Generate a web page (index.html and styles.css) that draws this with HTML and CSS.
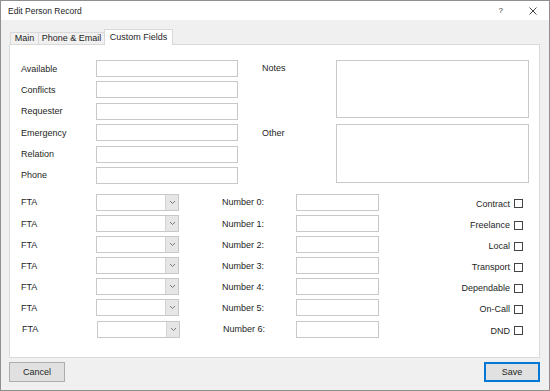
FILE: index.html
```html
<!DOCTYPE html>
<html lang="en">
<head>
    <meta charset="UTF-8">
    <title>Edit Person Record</title>
    <link rel="stylesheet" href="styles.css">
</head>
<body>
    <div class="window">
        <!-- title bar -->
        <div class="titlebar">
            <span class="title">Edit Person Record</span>
            <span class="help">?</span>
            <span class="close">
                <svg width="8" height="8" viewBox="0 0 8 8"><path d="M0.5 0.5L7.5 7.5M7.5 0.5L0.5 7.5" stroke="#333" stroke-width="0.9" fill="none"/></svg>
            </span>
        </div>

        <!-- tabs -->
        <div class="tabs">
            <div class="tab tab-main">Main</div>
            <div class="tab tab-phone">Phone &amp; Email</div>
            <div class="tab tab-custom active">Custom Fields</div>
        </div>

        <div class="panel">
            <div class="upper">
                <div class="fields">
                    <label>Available</label><div class="input"></div>
                    <label>Conflicts</label><div class="input"></div>
                    <label>Requester</label><div class="input"></div>
                    <label>Emergency</label><div class="input"></div>
                    <label>Relation</label><div class="input"></div>
                    <label>Phone</label><div class="input"></div>
                </div>
                <div class="memo">
                    <label>Notes</label><div class="input"></div>
                    <label class="other">Other</label><div class="input"></div>
                </div>
            </div>

            <div class="lower">
                <label>FTA</label><div class="combo"><span class="combo-btn"><svg width="5" height="3" viewBox="0 0 5 3"><path d="M0 0L2.5 2.5L5 0" stroke="#777" fill="none"/></svg></span></div>
                <label>Number 0:</label><div class="input"></div>
                <div class="check">Contract <span class="box"></span></div>

                <label>FTA</label><div class="combo"><span class="combo-btn"><svg width="5" height="3" viewBox="0 0 5 3"><path d="M0 0L2.5 2.5L5 0" stroke="#777" fill="none"/></svg></span></div>
                <label>Number 1:</label><div class="input"></div>
                <div class="check">Freelance <span class="box"></span></div>

                <label>FTA</label><div class="combo"><span class="combo-btn"><svg width="5" height="3" viewBox="0 0 5 3"><path d="M0 0L2.5 2.5L5 0" stroke="#777" fill="none"/></svg></span></div>
                <label>Number 2:</label><div class="input"></div>
                <div class="check">Local <span class="box"></span></div>

                <label>FTA</label><div class="combo"><span class="combo-btn"><svg width="5" height="3" viewBox="0 0 5 3"><path d="M0 0L2.5 2.5L5 0" stroke="#777" fill="none"/></svg></span></div>
                <label>Number 3:</label><div class="input"></div>
                <div class="check">Transport <span class="box"></span></div>

                <label>FTA</label><div class="combo"><span class="combo-btn"><svg width="5" height="3" viewBox="0 0 5 3"><path d="M0 0L2.5 2.5L5 0" stroke="#777" fill="none"/></svg></span></div>
                <label>Number 4:</label><div class="input"></div>
                <div class="check">Dependable <span class="box"></span></div>

                <label>FTA</label><div class="combo"><span class="combo-btn"><svg width="5" height="3" viewBox="0 0 5 3"><path d="M0 0L2.5 2.5L5 0" stroke="#777" fill="none"/></svg></span></div>
                <label>Number 5:</label><div class="input"></div>
                <div class="check">On-Call <span class="box"></span></div>

                <label class="shift">FTA</label><div class="combo shift"><span class="combo-btn"><svg width="5" height="3" viewBox="0 0 5 3"><path d="M0 0L2.5 2.5L5 0" stroke="#777" fill="none"/></svg></span></div>
                <label class="shift">Number 6:</label><div class="input"></div>
                <div class="check">DND <span class="box"></span></div>
            </div>
        </div>

        <!-- buttons -->
        <div class="footer">
            <div class="button">Cancel</div>
            <div class="button default">Save</div>
        </div>
    </div>
</body>
</html>
```

FILE: styles.css
```css
/* page */
body {
    margin: 0;
    font-family: 'Liberation Sans', Arial, sans-serif;
    font-size: 9px;
    color: #1e1e1e;
}

/* dialog window */
.window {
    width: 550px;
    height: 391px;
    box-sizing: border-box;
    border: 1px solid #8f8f8f;
    background: #f0f0f0;
    display: flex;
    flex-direction: column;
}

/* title bar */
.titlebar {
    height: 19px;
    background: #fff;
    display: flex;
    align-items: center;
    padding-left: 7px;
    font-size: 8.5px;
}

.help {
    margin-left: auto;
    font-size: 8px;
    color: #333;
}

.close {
    display: flex;
    margin: 0 12px 0 26px;
}

/* tabs */
.tabs {
    display: flex;
    align-items: flex-end;
    height: 15px;
    margin: 9px 0 0 9px;
}

.tab {
    box-sizing: border-box;
    height: 12px;
    border: 1px solid #d9d9d9;
    border-bottom: none;
    background: #f0f0f0;
    text-align: center;
    line-height: 11px;
    margin-left: -1px;
}

.tab-main {
    width: 29px;
    margin-left: 0;
}

.tab-phone {
    width: 67px;
}

.tab-custom {
    width: 69px;
}

.tab.active {
    height: 16px;
    margin-bottom: -1px;
    background: #fff;
    line-height: 15px;
    position: relative;
    z-index: 1;
}

/* tab page */
.panel {
    box-sizing: border-box;
    width: 531px;
    height: 314px;
    margin-left: 8px;
    border: 1px solid #d9d9d9;
    background: #fff;
    padding: 15px 15px 0 11px;
}

.input {
    box-sizing: border-box;
    border: 1px solid #c8c8c8;
    background: #fff;
}

label {
    display: flex;
    align-items: center;
}

/* upper fields */
.upper {
    display: flex;
}

.fields {
    display: grid;
    grid-template-columns: 75px 142px;
    grid-auto-rows: 17px;
    row-gap: 4.4px;
}

.memo {
    display: grid;
    grid-template-columns: 74px 193px;
    grid-template-rows: 58px 59px;
    row-gap: 6px;
    margin-left: 24px;
}

.memo label {
    align-items: flex-start;
    line-height: 17px;
}

.memo .other {
    line-height: 19px;
}

/* lower fields */
.lower {
    display: grid;
    grid-template-columns: 75px 126px 74px 83px 1fr;
    grid-auto-rows: 17px;
    row-gap: 4.1px;
    margin-top: 10px;
}

.combo {
    box-sizing: border-box;
    width: 83px;
    border: 1px solid #c8c8c8;
    display: flex;
    justify-content: flex-end;
}

.combo-btn {
    width: 12px;
    background: #e6e6e6;
    border-left: 1px solid #d4d4d4;
    display: flex;
    align-items: center;
    justify-content: center;
}

.shift {
    margin-left: 1px;
}

.check {
    display: flex;
    align-items: center;
    justify-content: flex-end;
    padding-top: 3px;
}

.box {
    box-sizing: border-box;
    width: 9px;
    height: 9px;
    border: 1px solid #444;
    margin: 0 1px 0 4px;
}

/* buttons */
.footer {
    display: flex;
    justify-content: space-between;
    margin: 4px 9px 0 8px;
}

.button {
    box-sizing: border-box;
    width: 56px;
    height: 20px;
    background: #e1e1e1;
    border: 1px solid #adadad;
    display: flex;
    align-items: center;
    justify-content: center;
}

.button.default {
    border-color: #0078d7;
    box-shadow: inset 0 0 0 1px #0078d7;
}
```
